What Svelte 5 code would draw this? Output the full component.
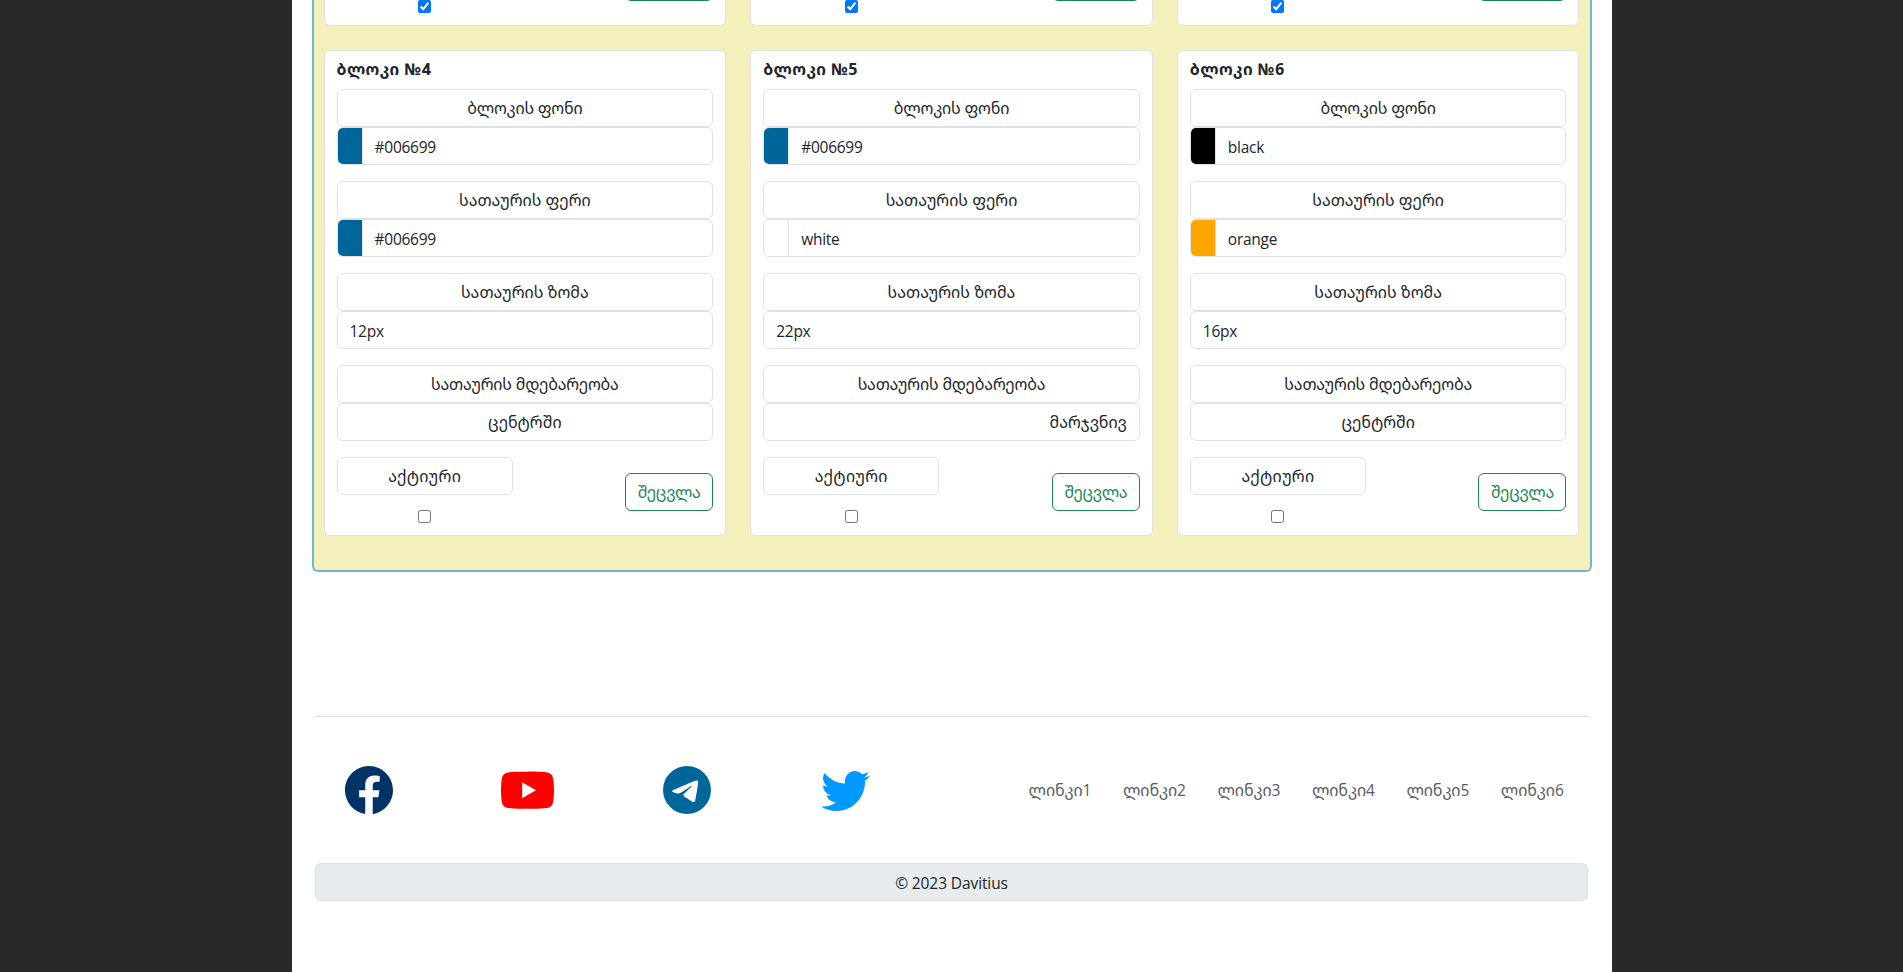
<script>
  const blocks = [
    { id: 4, bg: '#006699', title: '#006699', size: '12px', place: 'ცენტრში', align: 'center' },
    { id: 5, bg: '#006699', title: 'white', size: '22px', place: 'მარჯვნივ', align: 'right' },
    { id: 6, bg: 'black', title: 'orange', size: '16px', place: 'ცენტრში', align: 'center' }
  ];
  const links = [1, 2, 3, 4, 5, 6];
</script>

{#snippet swatch(color)}
  <div class="field split">
    <span class="chip" style="background:{color}"></span>
    <span class="value latin">{color}</span>
  </div>
{/snippet}

<div class="page">
  <section class="panel">
    {#each [1, 2, 3] as n (n)}
      <div class="tail">
        <input type="checkbox" checked aria-label="block {n}" />
        <span class="edge"></span>
      </div>
    {/each}
    {#each blocks as b (b.id)}
      <article class="card">
        <h6>ბლოკი №{b.id}</h6>
        <div class="group">
          <div class="field mid">ბლოკის ფონი</div>
          {@render swatch(b.bg)}
        </div>
        <div class="group">
          <div class="field mid loose">სათაურის ფერი</div>
          {@render swatch(b.title)}
        </div>
        <div class="group">
          <div class="field mid loose">სათაურის ზომა</div>
          <div class="field low latin">{b.size}</div>
        </div>
        <div class="group">
          <div class="field mid">სათაურის მდებარეობა</div>
          <div class="field {b.align}">{b.place}</div>
        </div>
        <div class="actions">
          <div class="active">
            <div class="field mid wide">აქტიური</div>
            <input type="checkbox" aria-label="active {b.id}" />
          </div>
          <button>შეცვლა</button>
        </div>
      </article>
    {/each}
  </section>

  <footer>
    <div class="nav">
      <div class="social">
        <svg width="48" height="48" viewBox="0 0 16 16" fill="#003366"><path d="M16 8.049c0-4.446-3.582-8.05-8-8.05C3.58 0-.002 3.603-.002 8.05c0 4.017 2.926 7.347 6.75 7.951v-5.625h-2.03V8.05H6.75V6.275c0-2.017 1.195-3.131 3.022-3.131.876 0 1.791.157 1.791.157v1.98h-1.009c-.993 0-1.303.621-1.303 1.258v1.51h2.218l-.354 2.326H9.25V16c3.824-.604 6.75-3.934 6.75-7.951z" /></svg>
        <svg class="tube" width="53" height="53" viewBox="0 0 16 16" fill="#ff0000"><path d="M8.051 1.999h.089c.822.003 4.987.033 6.11.335a2.01 2.01 0 0 1 1.415 1.42c.101.38.172.883.22 1.402l.01.104.022.26.008.104c.065.914.073 1.77.074 1.957v.075c-.001.194-.01 1.108-.082 2.06l-.008.105-.009.104c-.05.572-.124 1.14-.235 1.558a2.007 2.007 0 0 1-1.415 1.42c-1.16.312-5.569.334-6.18.335h-.142c-.309 0-1.587-.006-2.927-.052l-.17-.006-.087-.004-.171-.007-.171-.007c-1.11-.049-2.167-.128-2.654-.26a2.007 2.007 0 0 1-1.415-1.419c-.111-.417-.185-.986-.235-1.558L.09 9.82l-.008-.104A31.4 31.4 0 0 1 0 7.68v-.123c.002-.215.01-.958.064-1.778l.007-.103.003-.052.008-.104.022-.26.01-.104c.048-.519.119-1.023.22-1.402a2.007 2.007 0 0 1 1.415-1.42c.487-.13 1.544-.21 2.654-.26l.17-.007.172-.006.086-.003.171-.007A99.788 99.788 0 0 1 7.858 2h.193zM6.4 5.209v4.818l4.157-2.408L6.4 5.209z" /></svg>
        <svg width="48" height="48" viewBox="0 0 16 16" fill="#006699"><path d="M16 8A8 8 0 1 1 0 8a8 8 0 0 1 16 0zM8.287 5.906c-.778.324-2.334.994-4.666 2.01-.378.15-.577.298-.595.442-.03.243.275.339.69.47l.175.055c.408.133.958.288 1.243.294.26.006.549-.1.868-.32 2.179-1.471 3.304-2.214 3.374-2.23.05-.012.12-.026.166.016.047.041.042.12.037.141-.03.129-1.227 1.241-1.846 1.817-.193.18-.33.307-.358.336a8.154 8.154 0 0 1-.188.186c-.38.366-.664.64.015 1.088.327.216.589.393.85.571.284.194.568.387.936.629.093.06.183.125.27.187.331.236.63.448.997.414.214-.02.435-.22.547-.82.265-1.417.786-4.486.906-5.751a1.426 1.426 0 0 0-.013-.315.337.337 0 0 0-.114-.217.526.526 0 0 0-.31-.093c-.3.005-.763.166-2.984 1.09z" /></svg>
        <svg class="bird" width="49" height="49" viewBox="0 0 16 16" fill="#0099ff"><path d="M5.026 15c6.038 0 9.341-5.003 9.341-9.334 0-.14 0-.282-.006-.422A6.685 6.685 0 0 0 16 3.542a6.658 6.658 0 0 1-1.889.518 3.301 3.301 0 0 0 1.447-1.817 6.533 6.533 0 0 1-2.087.793A3.286 3.286 0 0 0 7.875 6.03a9.325 9.325 0 0 1-6.767-3.429 3.289 3.289 0 0 0 1.018 4.382A3.323 3.323 0 0 1 .64 6.575v.045a3.288 3.288 0 0 0 2.632 3.218 3.203 3.203 0 0 1-.865.115 3.23 3.23 0 0 1-.614-.057 3.283 3.283 0 0 0 3.067 2.277A6.588 6.588 0 0 1 .78 13.58a6.32 6.32 0 0 1-.78-.045A9.344 9.344 0 0 0 5.026 15z" /></svg>
      </div>
      <div class="links">
        {#each links as n (n)}<a href="#l{n}">ლინკი<span class="latin">{n}</span></a>{/each}
      </div>
    </div>
    <div class="copy latin">© 2023 Davitius</div>
  </footer>
</div>

<style>
  :global(body) {
    background: #292929;
  }
  .page {
    box-sizing: border-box;
    width: 1320px;
    height: 972px;
    margin: 0 auto;
    padding: 0 20px;
    overflow: hidden;
    background: #fff;
    color: #212529;
    font: 400 16px/24px 'Noto Sans Georgian', 'Noto Sans', 'DejaVu Sans', sans-serif;
    letter-spacing: -0.2px;
  }
  .page * {
    box-sizing: border-box;
  }
  .latin {
    font-family: 'Open Sans', 'Noto Sans', sans-serif;
    font-size: 15.5px;
    letter-spacing: -0.25px;
  }
  .panel {
    display: grid;
    grid-template-columns: repeat(3, 1fr);
    column-gap: 24px;
    height: 572px;
    padding: 0 10px;
    align-content: start;
    border: 2px solid #6bb5d6;
    border-top: 0;
    border-radius: 0 0 6px 6px;
    background: #f4f0bb;
  }
  .tail {
    display: flex;
    justify-content: space-between;
    height: 26px;
    margin-bottom: 24px;
    padding: 0 12px 0 93.5px;
    overflow: hidden;
    border: 1px solid #dee2e6;
    border-top: 0;
    border-radius: 0 0 6px 6px;
    background: #fff;
  }
  .edge {
    width: 88px;
    height: 38px;
    margin-top: -37px;
    border: 1px solid #198754;
    border-radius: 6px;
  }
  input {
    display: block;
    width: 13px;
    height: 13px;
    margin: 0;
  }
  .card {
    height: 486px;
    padding: 6px 12px 0;
    border: 1px solid #dee2e6;
    border-radius: 6px;
    background: #fff;
  }
  h6 {
    margin: 0 0 8px;
    font-size: 16px;
    font-weight: 700;
    line-height: 24px;
    letter-spacing: 0.4px;
  }
  .group {
    margin-bottom: 16px;
  }
  .field {
    height: 38px;
    padding: 6px 12px;
    border: 1px solid #dee2e6;
    border-radius: 6px;
  }
  .low {
    padding-top: 7px;
  }
  .mid,
  .center {
    text-align: center;
  }
  .center,
  .loose {
    letter-spacing: 0;
  }
  .right {
    text-align: right;
    letter-spacing: 0;
  }
  .split {
    display: flex;
    padding: 0;
    overflow: hidden;
  }
  .chip {
    width: 25px;
    border-right: 1px solid #dee2e6;
  }
  .value {
    padding: 7px 12px 5px;
  }
  .actions {
    display: flex;
    justify-content: space-between;
    align-items: flex-start;
  }
  .active {
    display: flex;
    flex-direction: column;
    align-items: center;
    gap: 15px;
    width: 176.33px;
  }
  .wide {
    width: 100%;
    letter-spacing: 0.3px;
  }
  button {
    width: 88px;
    height: 38px;
    margin-top: 16px;
    padding: 0;
    border: 1px solid #198754;
    border-radius: 6px;
    background: transparent;
    color: #198754;
    font: inherit;
    letter-spacing: -0.3px;
  }
  footer {
    margin-top: 144px;
  }
  .nav {
    display: flex;
    justify-content: space-between;
    align-items: center;
    height: 147px;
    padding: 0 28px 0 33px;
    border-top: 1px solid #dee2e6;
    border-radius: 6px;
  }
  .social {
    display: flex;
    align-items: center;
    gap: 108.7px;
  }
  .tube {
    margin-top: 2px;
  }
  .bird {
    margin-left: 1px;
    margin-bottom: 1px;
  }
  .links {
    display: flex;
    gap: 31.8px;
  }
  a {
    color: #595c5f;
    text-decoration: none;
    letter-spacing: -0.1px;
  }
  .copy {
    height: 38px;
    margin: 0 3.5px;
    padding: 7px 6px 5px;
    border: 1px solid #dee2e6;
    border-radius: 6px;
    background: #e7ebee;
    text-align: center;
    letter-spacing: -0.1px;
  }
</style>
